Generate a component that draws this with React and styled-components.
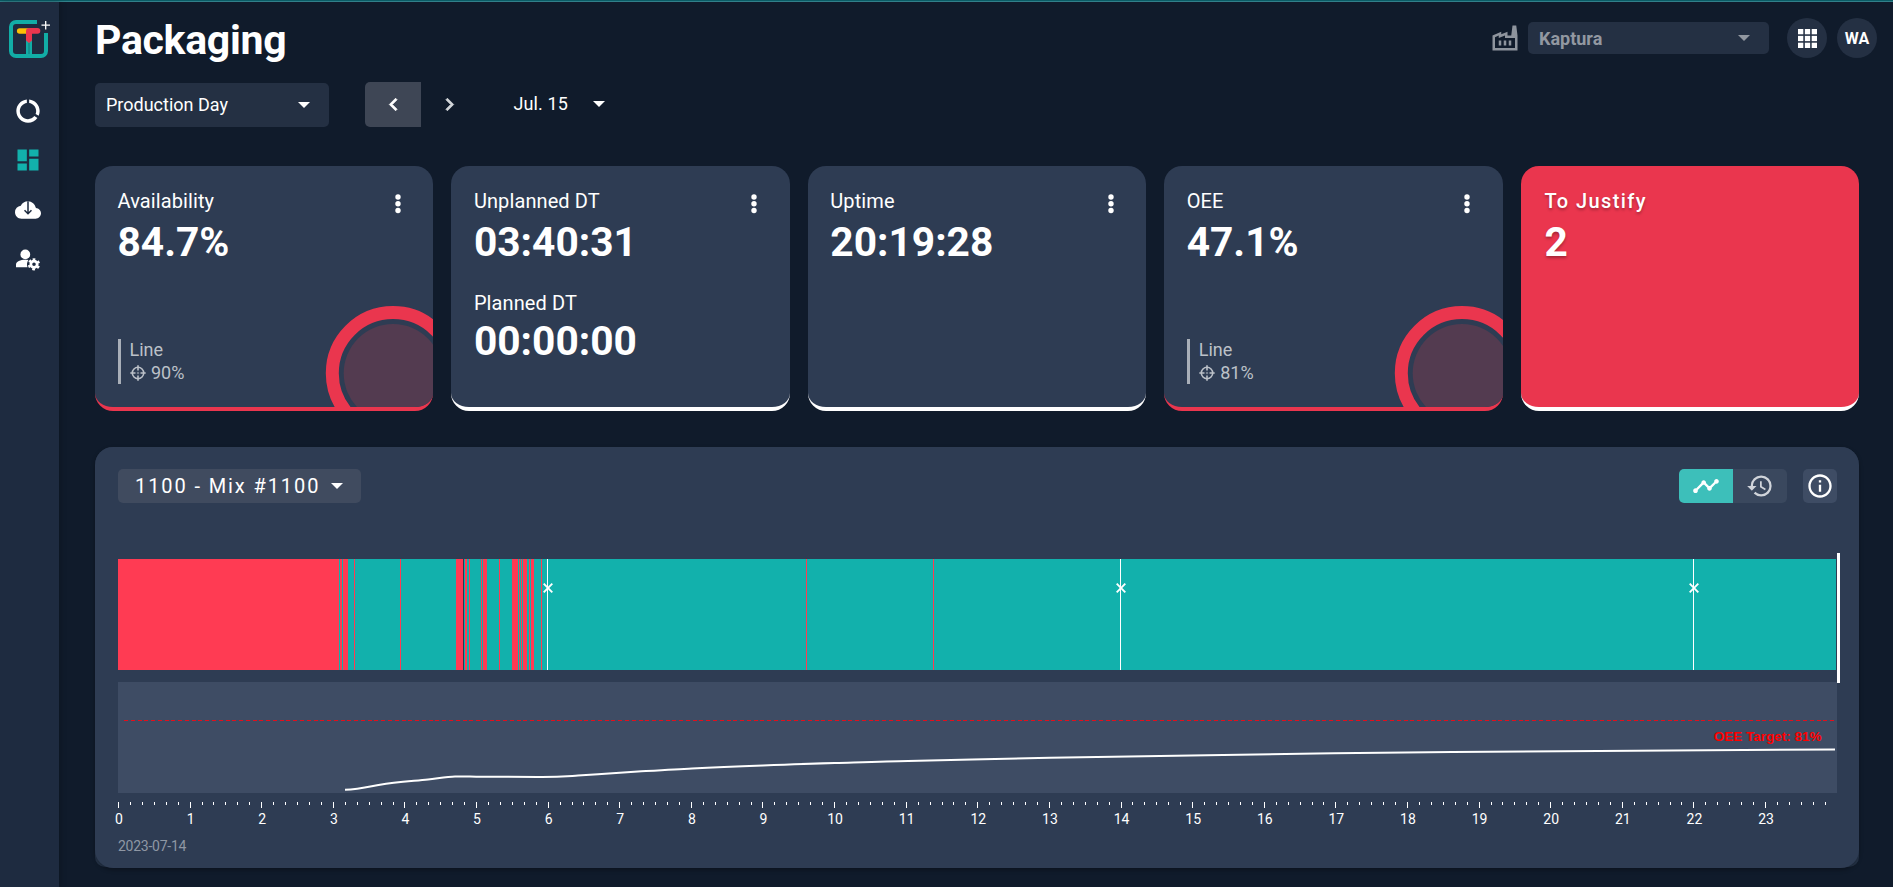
import React from 'react';
import styled, { createGlobalStyle, css } from 'styled-components';
import {
  MdDataUsage,
  MdDashboard,
  MdOutlineFactory,
  MdChevronLeft,
  MdChevronRight,
  MdTimeline,
  MdHistory,
  MdInfoOutline,
} from 'react-icons/md';

const RED = '#ea364e';
const TEAL = '#12b1ac';

const GlobalStyle = createGlobalStyle`
  * { box-sizing: border-box; }
  body {
    margin: 0;
    background: #101b2b;
    color: #fff;
    font-family: Roboto, "Liberation Sans", sans-serif;
    overflow: hidden;
  }
  svg { display: block; flex: none; }
`;

const LoadingBar = styled.div`
  height: 2px;
  background: #0a5c65;
  border-bottom: 1px solid #32808a;
`;

const Page = styled.div`
  display: flex;
  height: 885px;
`;

const Sidebar = styled.nav`
  width: 59px;
  flex: none;
  display: flex;
  flex-direction: column;
  background: #1e2b40;
  box-shadow: 1px 0 6px rgba(0, 0, 0, 0.25);
  padding-top: 16px;
`;

const Logo = styled.div`
  padding-left: 8px;
  margin-bottom: 26px;
`;

const NavItem = styled.a`
  height: 49.6px;
  width: 55px;
  display: flex;
  align-items: center;
  justify-content: center;
  font-size: 28px;
  color: ${({ $active }) => ($active ? TEAL : '#fff')};
`;

const Main = styled.main`
  flex: 1;
  min-width: 0;
  padding: 0 34px 0 36px;
  display: flex;
  flex-direction: column;
`;

const Header = styled.header`
  height: 80px;
  display: flex;
  justify-content: space-between;
  margin-right: -18px;
`;

const Title = styled.h1`
  margin: 14px 0 0;
  font-size: 41px;
  line-height: 48px;
  font-weight: 700;
  letter-spacing: -0.3px;
`;

const HeaderTools = styled.div`
  display: flex;
  align-items: center;
  height: 42px;
  margin-top: 15px;
`;

const FactoryIcon = styled(MdOutlineFactory)`
  font-size: 30px;
  color: #8e949d;
  margin-right: 8px;
`;

const Select = styled.div`
  display: flex;
  align-items: center;
  justify-content: space-between;
  width: ${({ $width }) => $width}px;
  height: ${({ $height }) => $height}px;
  padding: 0 19px 0 11px;
  border-radius: 5px;
  background: #243043;
  font-size: 18px;
  ${({ $muted }) =>
    $muted &&
    css`
      color: #9298a1;
      font-weight: 700;
    `}
`;

const RoundButton = styled.button`
  width: 40px;
  height: 40px;
  margin-left: ${({ $gap }) => $gap}px;
  padding: 0;
  border: 0;
  border-radius: 50%;
  background: #243043;
  color: #fff;
  display: flex;
  align-items: center;
  justify-content: center;
  font: 700 16px Roboto, sans-serif;
`;

const Toolbar = styled.div`
  display: flex;
  height: 45px;
  align-items: center;
`;

const StepButton = styled.button`
  width: 56px;
  height: 45px;
  padding: 0;
  border: 0;
  display: flex;
  align-items: center;
  justify-content: center;
  font-size: 25px;
  color: ${({ $active }) => ($active ? '#fff' : '#d3d6da')};
  background: ${({ $active }) => ($active ? '#3e4655' : 'transparent')};
  border-radius: 5px 0 0 5px;
  margin-left: ${({ $active }) => ($active ? 36 : 0)}px;
  path:last-child {
    stroke: currentColor;
    stroke-width: 0.8px;
  }
`;

const DateLabel = styled.div`
  display: flex;
  align-items: center;
  gap: 25px;
  margin: 0 0 2px 36.5px;
  font-size: 18px;
  letter-spacing: 0.1px;
`;

const Cards = styled.section`
  display: grid;
  grid-template-columns: repeat(5, 1fr);
  gap: 18px;
  margin-top: 39px;
`;

const Card = styled.article`
  position: relative;
  overflow: hidden;
  height: 245px;
  padding: 23px 22.500px 23px 22.500px;
  border-radius: 18px;
  border-bottom: 4px solid ${({ $accent = '#fff' }) => $accent};
  background: #2e3c53;
  display: flex;
  flex-direction: column;
  ${({ $alert }) =>
    $alert &&
    css`
      background: ${RED};
      padding-left: 24px;
      text-shadow: 0 2px 3px rgba(0, 0, 0, 0.3);
    `}
`;

const CardTop = styled.div`
  display: flex;
  justify-content: space-between;
`;

const CardLabel = styled.div`
  font-size: 20px;
  line-height: 24px;
  letter-spacing: ${({ $wide }) => ($wide ? 1.4 : 0.1)}px;
  font-weight: ${({ $wide }) => ($wide ? 500 : 400)};
`;

const CardValue = styled.div`
  margin-top: 6px;
  font-size: 40.7px;
  line-height: 47px;
  font-weight: 700;
`;

const Secondary = styled.div`
  margin-top: 25px;
  ${CardValue} {
    margin-top: 3px;
  }
`;

const Target = styled.div`
  margin-top: auto;
  height: 45px;
  padding-left: 9px;
  border-left: 3px solid #a9afb8;
  color: #bcc1c8;
  font-size: 18px;
  line-height: 23px;
`;

const TargetName = styled.div`
  margin-top: -1px;
`;

const TargetValue = styled.div`
  display: flex;
  align-items: center;
  gap: 5.500px;
`;

const Gauge = styled.svg`
  position: absolute;
  left: 230px;
  top: 139px;
`;

const Panel = styled.section`
  margin-top: 36px;
  height: 420px;
  border-radius: 18px 18px 10px 10px;
  background: #26354a;
`;

const PanelBody = styled.div`
  height: 421px;
  padding: 22px 22px 0 23px;
  border-radius: 18px;
  background: #2e3c53;
  box-shadow: 0 2px 4px rgba(0, 0, 0, 0.3);
`;

const PanelHeader = styled.div`
  display: flex;
  justify-content: space-between;
  height: 34px;
`;

const LineSelect = styled.div`
  display: flex;
  align-items: center;
  justify-content: space-between;
  width: 243px;
  height: 34px;
  padding: 0 18px 0 17px;
  border-radius: 5px;
  background: #404b5f;
  font-size: 20px;
  letter-spacing: 1.9px;
`;

const ViewTools = styled.div`
  display: flex;
`;

const ToolButton = styled.button`
  width: ${({ $width = 54 }) => $width}px;
  height: 34px;
  padding: 0;
  border: 0;
  display: flex;
  align-items: center;
  justify-content: center;
  font-size: 28px;
  color: ${({ $color = '#fff' }) => $color};
  background: ${({ $bg }) => $bg};
  border-radius: ${({ $radius }) => $radius};
  margin-left: ${({ $gap = 0 }) => $gap}px;
`;

const Chart = styled.svg`
  margin-top: 50px;
  overflow: visible;
`;

const ChartDate = styled.div`
  margin-top: 9px;
  font-size: 14px;
  line-height: 17px;
  letter-spacing: -0.25px;
  color: #8f97a4;
`;

const Caret = () => (
  <svg width="12" height="6" viewBox="0 0 12 6">
    <path d="M0 0h12L6 6z" fill="currentColor" />
  </svg>
);

const BrandMark = () => (
  <svg width="44" height="42" viewBox="8 18 44 42">
    <path
      d="M37 22H16a5 5 0 0 0-5 5v24a5 5 0 0 0 5 5h25a5 5 0 0 0 5-5V33"
      fill="none"
      stroke="#12ada6"
      strokeWidth="4"
    />
    <path d="M29 38v17" stroke="#12ada6" strokeWidth="6" />
    <path d="M29 43v11" stroke="#1e2b40" strokeWidth="0.8" opacity=".5" />
    <path d="M19.700 31H28" stroke="#fbbf05" strokeWidth="5.600" strokeLinecap="round" />
    <path
      d="M26 31a3 3 0 0 1 3-3h8.500a2.800 2.800 0 0 1 0 5.700H32V40.500l-3 2.500-3-2.500z"
      fill={RED}
    />
    <path d="M41.500 25.200h8.500M45.700 21v8.500" stroke="#fff" strokeWidth="1.300" />
  </svg>
);

const CloudIcon = () => (
  <svg width="26" height="26" viewBox="0 0 24 24">
    <path
      d="M19.350 10.040A7.490 7.490 0 0 0 12 4C9.110 4 6.600 5.640 5.350 8.040A5.994 5.994 0 0 0 0 14c0 3.310 2.690 6 6 6h13c2.760 0 5-2.240 5-5 0-2.640-2.050-4.780-4.650-4.960z"
      fill="#fff"
    />
    <path d="M12 4v11M8.800 12.200 12 15.400l3.200-3.200" fill="none" stroke="#1e2b40" strokeWidth="1.400" />
  </svg>
);

const UserGearIcon = () => (
  <svg width="24" height="22" viewBox="0 0 24 22" fill="none">
    <circle cx="9.300" cy="5.400" r="4.900" fill="#fff" />
    <path d="M0 18.300v-2.600c0-3 4.400-4.900 9.300-4.900 1.100 0 2.200.1 3.100.3a8 8 0 0 0-.9 7.200z" fill="#fff" />
    <circle cx="18" cy="15.300" r="3.200" stroke="#fff" strokeWidth="2.800" />
    <circle
      cx="18"
      cy="15.300"
      r="5"
      stroke="#fff"
      strokeWidth="2.200"
      strokeDasharray="2.600 2.636"
      transform="rotate(-105 18 15.300)"
    />
  </svg>
);

const GridIcon = () => (
  <svg width="19" height="19" viewBox="0 0 19 19" fill="#fff">
    {[0, 6.85, 13.7].map((y) =>
      [0, 6.85, 13.7].map((x) => <rect key={`${x}-${y}`} x={x} y={y} width="5.3" height="5.3" />),
    )}
  </svg>
);

const MoreIcon = styled(({ className }) => (
  <svg className={className} width="6" height="20" viewBox="0 0 6 20" fill="#fff">
    <circle cx="3" cy="3" r="2.7" />
    <circle cx="3" cy="9.700" r="2.700" />
    <circle cx="3" cy="16.500" r="2.700" />
  </svg>
))`
  margin: 5px 10px -1px 0;
`;

const Crosshair = () => (
  <svg width="16" height="16" viewBox="0 0 16 16" fill="none" stroke="currentColor">
    <circle cx="8" cy="8" r="5.700" strokeWidth="1.600" />
    <path d="M8 .3v5.200M8 10.500v5.200M.3 8h5.200M10.500 8h5.200" strokeWidth="1.600" />
    <path d="M8 6.800v2.400M6.800 8h2.400" strokeWidth="1" opacity=".6" />
  </svg>
);

const RingGauge = () => (
  <Gauge width="136" height="136" viewBox="0 0 136 136">
    <circle cx="68" cy="68.300" r="60.700" fill="none" stroke={RED} strokeWidth="13" />
    <circle cx="68" cy="68.300" r="49.300" fill="#533b50" />
  </Gauge>
);

const KpiCard = ({ label, value, target, accent, menu = true, alert, children }) => (
  <Card $accent={accent} $alert={alert}>
    <CardTop>
      <CardLabel $wide={alert}>{label}</CardLabel>
      {menu && <MoreIcon />}
    </CardTop>
    <CardValue>{value}</CardValue>
    {children}
    {target && (
      <>
        <Target>
          <TargetName>Line</TargetName>
          <TargetValue>
            <Crosshair />
            {target}
          </TargetValue>
        </Target>
        <RingGauge />
      </>
    )}
  </Card>
);

const HOUR = 71.61;
const STOPS = [
  [0, 221], [222, 2], [225, 5], [236, 1], [282, 1], [338, 7], [347, 2], [351, 1],
  [363, 1], [365, 4], [381, 1], [394, 6], [401, 1], [403, 1], [405, 4], [411, 1],
  [413, 3], [423, 1], [688, 1], [815, 1],
];
const SHIFTS = [6, 14, 22];
const HOURS = Array.from({ length: 24 }, (_, h) => h);
const TICKS = Array.from({ length: 144 }, (_, i) => i);

const TREND =
  'M227 236.700C240 236.700 250 234 262 231.700C277 229.300 295 228 310 226.400C322 225 330 223.700 337 223.500H352C370 224 400 223.700 420 224C440 224.200 448 223.300 460 222.500C480 221.200 500 219.800 520 218.600C545 217 560 216 574 215.400C600 214 620 213.300 645 212.500C670 211.500 690 210.700 717 210C750 209 770 208.300 790 208C840 206.700 880 205.800 932 204.800C1000 203.500 1050 202.700 1089 202.200C1150 201.200 1180 200.700 1216 200.300C1300 199.200 1400 198.500 1480 197.900C1560 197.400 1640 196.800 1717 196.500';

const Timeline = () => (
  <Chart width="1722" height="276" viewBox="0 0 1722 276">
    <g shapeRendering="crispEdges">
      <rect x="0" y="6" width="1718" height="111" fill={TEAL} />
      {STOPS.map(([x, w]) => (
        <rect key={x} x={x} y="6" width={w} height="111" fill="#ff3b53" />
      ))}
      <rect x="345" y="6" width="1" height="111" fill="#2c3950" />
      <rect x="0" y="129" width="1719" height="111" fill="#3e4c64" />
      {SHIFTS.map((h) => (
        <rect key={h} x={Math.floor(h * HOUR)} y="6" width="1" height="111" fill="#fff" />
      ))}
      <rect x="1719" y="0" width="3" height="130" fill="#fff" />
      <path d="M6 167.500H1717" stroke="#e30f1c" strokeDasharray="4 2.770" />
      {TICKS.map((i) => (
        <rect
          key={i}
          x={Math.round((i * HOUR) / 6)}
          y="249"
          width="1"
          height={i % 6 ? 3 : 6}
          fill="#fff"
        />
      ))}
    </g>
    {SHIFTS.map((h) => (
      <path
        key={h}
        d="M-4.300-4.300 4.300 4.300M-4.300 4.300 4.300-4.300"
        transform={`translate(${Math.floor(h * HOUR) + 1} 35)`}
        stroke="#fff"
        strokeWidth="1.900"
      />
    ))}
    <path d={TREND} fill="none" stroke="#fff" strokeWidth="2" />
    <text
      x="1703.500"
      y="187.500"
      textAnchor="end"
      fill="#f00"
      fontFamily="Liberation Sans, sans-serif"
      fontSize="13.500"
      fontWeight="700"
    >
      OEE Target: 81%
    </text>
    <g fill="#fff" fontSize="14" textAnchor="middle">
      {HOURS.map((h) => (
        <text key={h} x={h * HOUR + 1} y="271">
          {h}
        </text>
      ))}
    </g>
  </Chart>
);

export default function App() {
  return (
    <>
      <GlobalStyle />
      <LoadingBar />
      <Page>
        <Sidebar>
          <Logo>
            <BrandMark />
          </Logo>
          <NavItem><MdDataUsage /></NavItem>
          <NavItem $active><MdDashboard /></NavItem>
          <NavItem><CloudIcon /></NavItem>
          <NavItem><UserGearIcon /></NavItem>
        </Sidebar>
        <Main>
          <Header>
            <Title>Packaging</Title>
            <HeaderTools>
              <FactoryIcon />
              <Select $width={241} $height={32} $muted>
                Kaptura
                <Caret />
              </Select>
              <RoundButton $gap={18}><GridIcon /></RoundButton>
              <RoundButton $gap={10}>WA</RoundButton>
            </HeaderTools>
          </Header>
          <Toolbar>
            <Select $width={234} $height={44}>
              Production Day
              <Caret />
            </Select>
            <StepButton $active><MdChevronLeft /></StepButton>
            <StepButton><MdChevronRight /></StepButton>
            <DateLabel>
              Jul. 15
              <Caret />
            </DateLabel>
          </Toolbar>
          <Cards>
            <KpiCard label="Availability" value="84.7%" target="90%" accent={RED} />
            <KpiCard label="Unplanned DT" value="03:40:31">
              <Secondary>
                <CardLabel>Planned DT</CardLabel>
                <CardValue>00:00:00</CardValue>
              </Secondary>
            </KpiCard>
            <KpiCard label="Uptime" value="20:19:28" />
            <KpiCard label="OEE" value="47.1%" target="81%" accent={RED} />
            <KpiCard label="To Justify" value="2" menu={false} alert />
          </Cards>
          <Panel>
            <PanelBody>
              <PanelHeader>
                <LineSelect>
                  1100 - Mix #1100
                  <Caret />
                </LineSelect>
                <ViewTools>
                  <ToolButton $bg="#3dbfba" $radius="5px 0 0 5px"><MdTimeline /></ToolButton>
                  <ToolButton $bg="#3a485e" $radius="0 5px 5px 0" $color="#d0d4da">
                    <MdHistory />
                  </ToolButton>
                  <ToolButton $bg="#3e4c64" $radius="5px" $width={34} $gap={16}>
                    <MdInfoOutline />
                  </ToolButton>
                </ViewTools>
              </PanelHeader>
              <Timeline />
              <ChartDate>2023-07-14</ChartDate>
            </PanelBody>
          </Panel>
        </Main>
      </Page>
    </>
  );
}
